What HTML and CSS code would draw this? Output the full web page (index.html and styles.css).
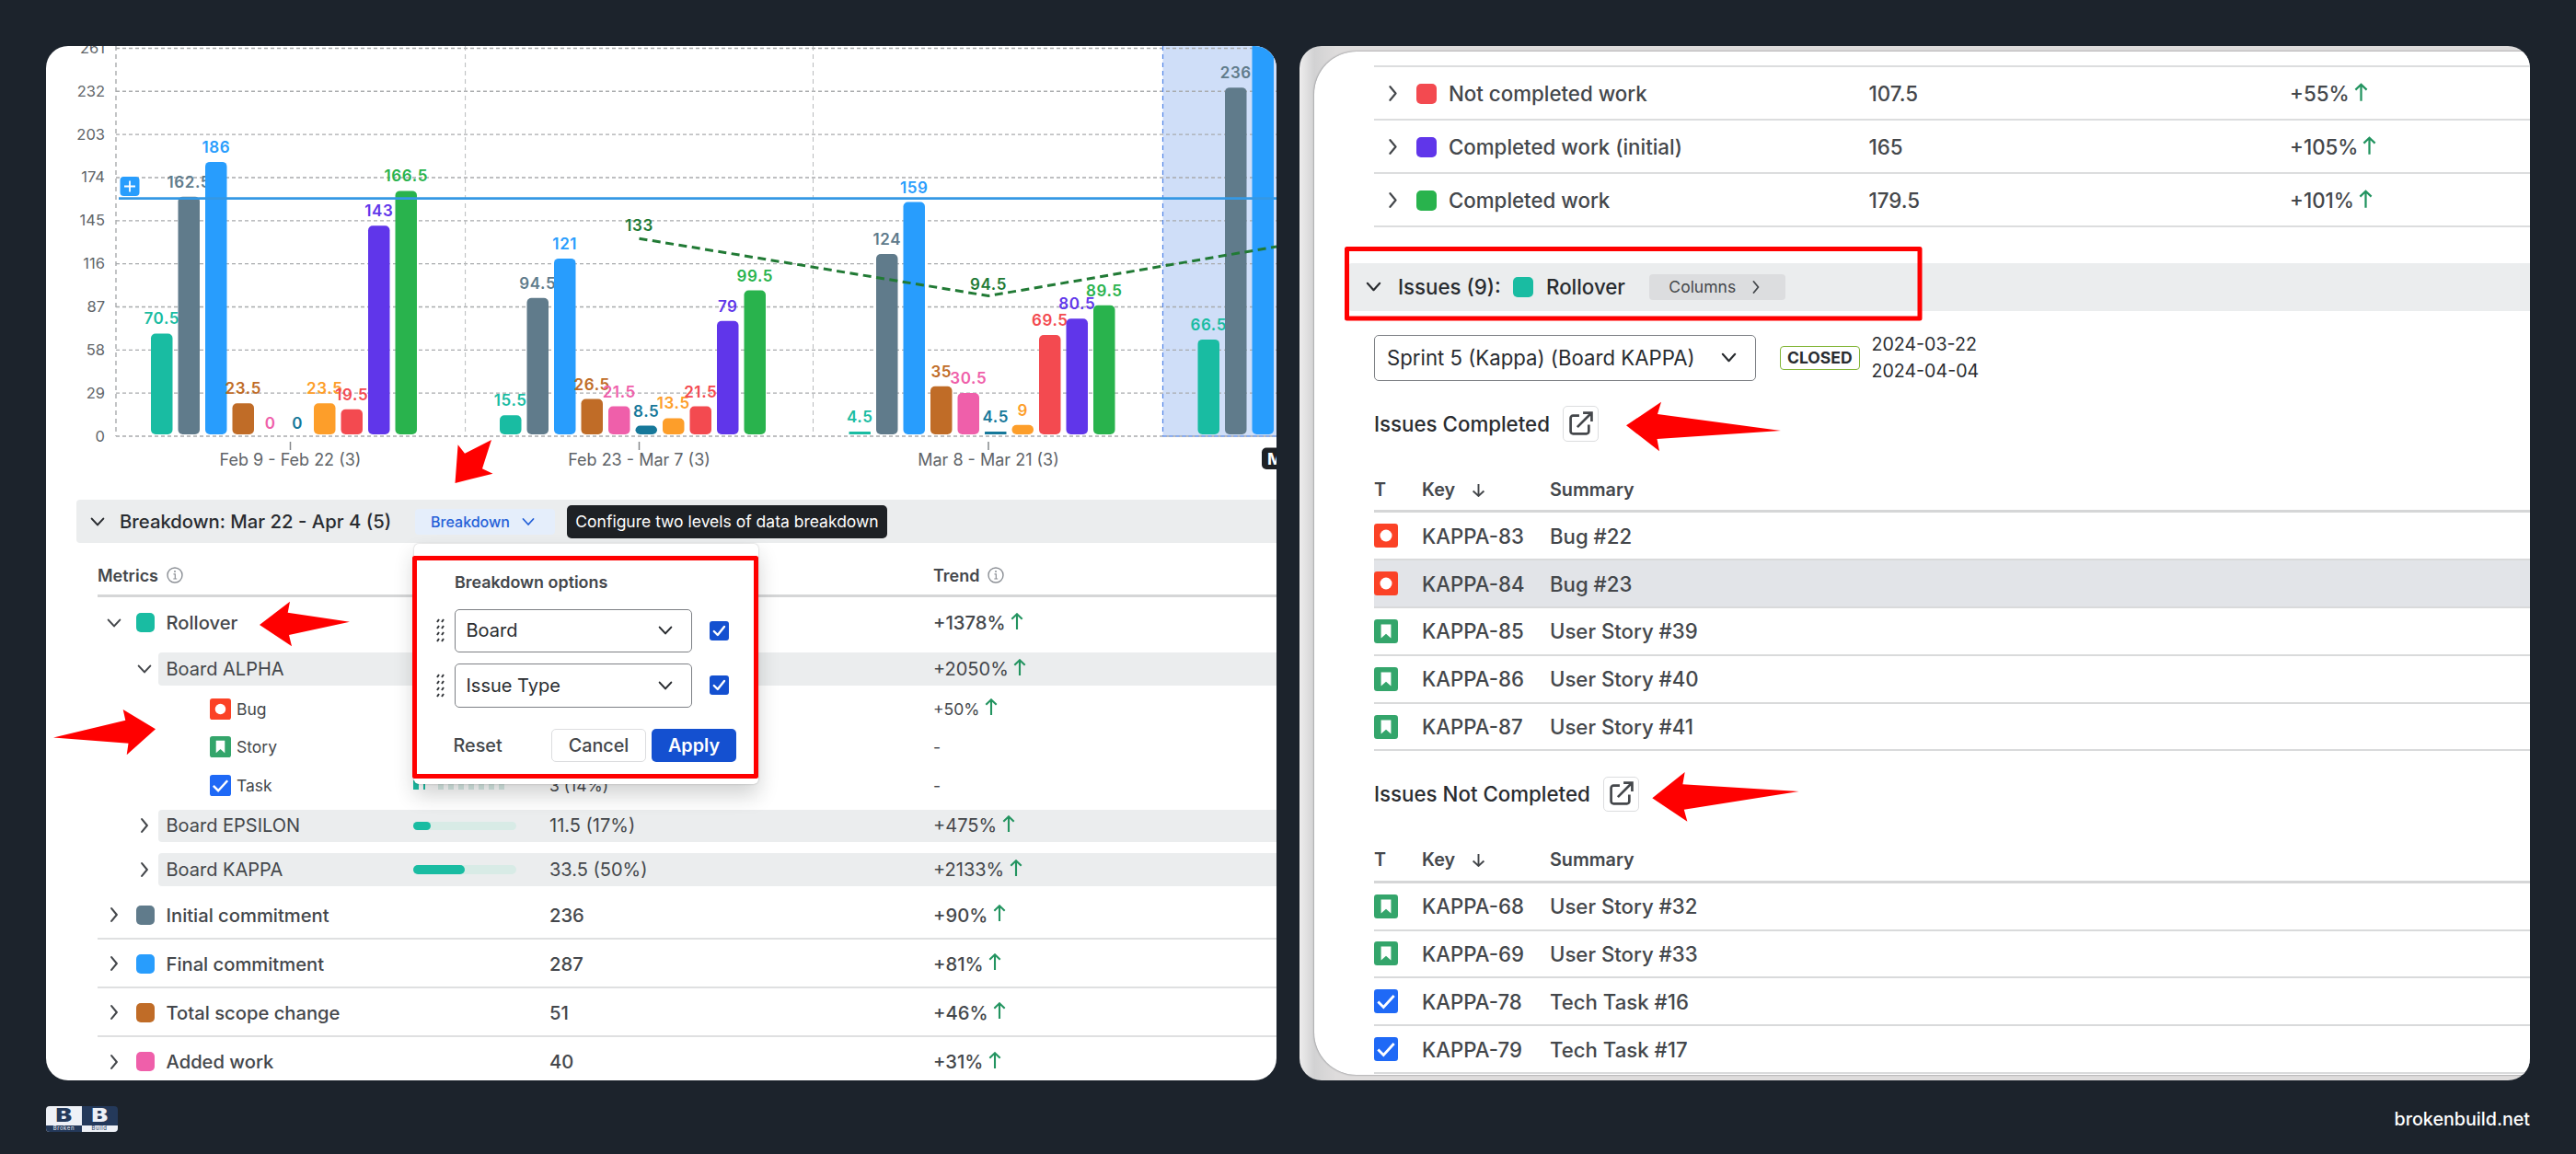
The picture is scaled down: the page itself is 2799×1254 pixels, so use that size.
FILE: index.html
```html
<!DOCTYPE html>
<html lang="en">
<head>
  <meta charset="UTF-8">
  <meta name="viewport" content="width=device-width, initial-scale=1.0">
  <title>Breakdown and issues</title>
  <link rel="stylesheet" href="styles.css">
</head>
<body>
  <!-- shared icons -->
  <svg class="defs" width="0" height="0">
    <symbol id="down" viewBox="0 0 14 14"><path d="M1.5 4 L7 10 L12.500 4" fill="none" stroke="currentColor" stroke-width="1.800" stroke-linecap="round" stroke-linejoin="round"/></symbol>
    <symbol id="right" viewBox="0 0 14 14"><path d="M4.500 1 L9.500 7 L4.500 13" fill="none" stroke="currentColor" stroke-width="1.800" stroke-linecap="round" stroke-linejoin="round"/></symbol>
    <symbol id="up" viewBox="0 0 14 18"><path d="M7 18 V1.500 M1.300 6.800 L7 1.300 L12.700 6.800" fill="none" stroke="currentColor" stroke-width="2.100"/></symbol>
    <symbol id="sort" viewBox="0 0 14 14"><path d="M7 1 V13 M1.500 8 L7 13 L12.500 8" fill="none" stroke="currentColor" stroke-width="1.800"/></symbol>
    <symbol id="info" viewBox="0 0 18 18"><circle cx="9" cy="9" r="8" fill="none" stroke="#8c9096" stroke-width="1.400"/><path d="M7.500 7.800 H9.300 V13 M7.300 13 H11.200" fill="none" stroke="#8c9096" stroke-width="1.200"/><circle cx="9" cy="5" r="1" fill="#8c9096"/></symbol>
    <symbol id="bug" viewBox="0 0 24 24"><rect width="24" height="24" rx="3" fill="#fb4226"/><circle cx="12" cy="12" r="6" fill="#fff"/></symbol>
    <symbol id="story" viewBox="0 0 24 24"><rect width="24" height="24" rx="3" fill="#34a56b"/><path d="M7 5 H17 V19 L12 14.500 L7 19 Z" fill="#fff"/></symbol>
    <symbol id="task" viewBox="0 0 24 24"><rect width="24" height="24" rx="3" fill="#1f69f6"/><path d="M4 12.500 L9.500 18 L20 6.500" fill="none" stroke="#fff" stroke-width="2.600"/></symbol>
    <symbol id="open" viewBox="0 0 26 26"><path d="M11.500 4.500 H5 a2.500 2.500 0 0 0 -2.500 2.500 V21 a2.500 2.500 0 0 0 2.500 2.500 H19 a2.500 2.500 0 0 0 2.500 -2.500 V14 M9.500 16.500 L24 2 M15.500 1.500 H24.500 V10.500" fill="none" stroke="#44474b" stroke-width="2.600"/></symbol>
    <symbol id="grip" viewBox="0 0 10 26"><path d="M1 4 L3 1 M6 4 L8 1 M1 11 L3 8 M6 11 L8 8 M1 18 L3 15 M6 18 L8 15 M1 25 L3 22 M6 25 L8 22" stroke="#33363a" stroke-width="2"/></symbol>
    <symbol id="check" viewBox="0 0 21 21"><rect width="21" height="21" rx="3" fill="#1450d0"/><path d="M4.800 11 L8.800 15 L16 6" fill="none" stroke="#fff" stroke-width="2.400" stroke-linecap="round" stroke-linejoin="round"/></symbol>
  </svg>

  <main class="panels">
    <section class="panel">
      <svg class="chart" id="chart" width="1337" height="493"></svg>

      <div class="section-bar">
        <svg class="chev"><use href="#down"/></svg>
        <span class="section-title">Breakdown: Mar 22 - Apr 4 (5)</span>
        <button class="breakdown-btn">Breakdown <svg class="chev-sm"><use href="#down"/></svg></button>
        <span class="tooltip">Configure two levels of data breakdown</span>
      </div>

      <div class="table">
        <div class="head">
          <span class="head-name">Metrics <svg class="info"><use href="#info"/></svg></span>
          <span>Trend <svg class="info"><use href="#info"/></svg></span>
        </div>
        <div class="row main first">
          <div class="lead"><svg class="chev"><use href="#down"/></svg><i class="swatch teal"></i></div>
          <div class="cells"><span>Rollover</span><span></span><span></span><span>+1378%<svg class="up"><use href="#up"/></svg></span></div>
        </div>
        <div class="row board alpha">
          <div class="lead"><svg class="chev"><use href="#down"/></svg></div>
          <div class="cells"><span>Board ALPHA</span><span></span><span></span><span>+2050%<svg class="up"><use href="#up"/></svg></span></div>
        </div>
        <div class="leaves">
          <div class="row leaf">
            <div class="lead"></div>
            <div class="cells"><span><svg class="type"><use href="#bug"/></svg>Bug</span><span></span><span></span><span>+50%<svg class="up"><use href="#up"/></svg></span></div>
          </div>
          <div class="row leaf">
            <div class="lead"></div>
            <div class="cells"><span><svg class="type"><use href="#story"/></svg>Story</span><span></span><span></span><span>-</span></div>
          </div>
          <div class="row leaf">
            <div class="lead"></div>
            <div class="cells"><span><svg class="type"><use href="#task"/></svg>Task</span><span class="segments"></span><span>3 (14%)</span><span>-</span></div>
          </div>
        </div>
        <div class="row board epsilon">
          <div class="lead"><svg class="chev"><use href="#right"/></svg></div>
          <div class="cells"><span>Board EPSILON</span><span><i class="track"><i class="fill" style="width: 17%"></i></i></span><span>11.5 (17%)</span><span>+475%<svg class="up"><use href="#up"/></svg></span></div>
        </div>
        <div class="row board kappa">
          <div class="lead"><svg class="chev"><use href="#right"/></svg></div>
          <div class="cells"><span>Board KAPPA</span><span><i class="track"><i class="fill" style="width: 50%"></i></i></span><span>33.5 (50%)</span><span>+2133%<svg class="up"><use href="#up"/></svg></span></div>
        </div>
        <div class="rest">
          <div class="row main">
            <div class="lead"><svg class="chev"><use href="#right"/></svg><i class="swatch slate"></i></div>
            <div class="cells"><span>Initial commitment</span><span></span><span>236</span><span>+90%<svg class="up"><use href="#up"/></svg></span></div>
          </div>
          <div class="row main">
            <div class="lead"><svg class="chev"><use href="#right"/></svg><i class="swatch blue"></i></div>
            <div class="cells"><span>Final commitment</span><span></span><span>287</span><span>+81%<svg class="up"><use href="#up"/></svg></span></div>
          </div>
          <div class="row main">
            <div class="lead"><svg class="chev"><use href="#right"/></svg><i class="swatch brown"></i></div>
            <div class="cells"><span>Total scope change</span><span></span><span>51</span><span>+46%<svg class="up"><use href="#up"/></svg></span></div>
          </div>
          <div class="row main">
            <div class="lead"><svg class="chev"><use href="#right"/></svg><i class="swatch pink"></i></div>
            <div class="cells"><span>Added work</span><span></span><span>40</span><span>+31%<svg class="up"><use href="#up"/></svg></span></div>
          </div>
        </div>
      </div>

      <!-- breakdown menu -->
      <div class="popup">
        <div class="popup-inner">
          <div class="popup-title">Breakdown options</div>
          <div class="option"><svg class="grip"><use href="#grip"/></svg><div class="select">Board <svg class="chev"><use href="#down"/></svg></div><svg class="check"><use href="#check"/></svg></div>
          <div class="option"><svg class="grip"><use href="#grip"/></svg><div class="select">Issue Type <svg class="chev"><use href="#down"/></svg></div><svg class="check"><use href="#check"/></svg></div>
          <div class="actions"><span class="reset">Reset</span><button class="cancel">Cancel</button><button class="apply">Apply</button></div>
        </div>
      </div>
    </section>

    <section class="panel panel-issues">
      <div class="sheet">
        <div class="metrics">
          <div class="metric cut"></div>
          <div class="metric"><svg class="chev"><use href="#right"/></svg><i class="swatch red"></i><span class="m-name">Not completed work</span><span class="m-value">107.5</span><span>+55%</span><svg class="up"><use href="#up"/></svg></div>
          <div class="metric"><svg class="chev"><use href="#right"/></svg><i class="swatch violet"></i><span class="m-name">Completed work (initial)</span><span class="m-value">165</span><span>+105%</span><svg class="up"><use href="#up"/></svg></div>
          <div class="metric"><svg class="chev"><use href="#right"/></svg><i class="swatch green"></i><span class="m-name">Completed work</span><span class="m-value">179.5</span><span>+101%</span><svg class="up"><use href="#up"/></svg></div>
        </div>
        <div class="issues-bar">
          <svg class="chev"><use href="#down"/></svg>
          <span class="issues-count">Issues (9):</span>
          <i class="swatch teal"></i>
          <span class="issues-metric">Rollover</span>
          <button class="columns-btn">Columns <svg class="chev-sm"><use href="#right"/></svg></button>
        </div>
        <div class="sprint">
          <div class="select sprint-select">Sprint 5 (Kappa) (Board KAPPA) <svg class="chev"><use href="#down"/></svg></div>
          <span class="closed">CLOSED</span>
          <div class="dates">2024-03-22<br>2024-04-04</div>
        </div>

        <div class="list-title"><span>Issues Completed</span><button class="open-btn"><svg><use href="#open"/></svg></button></div>
        <div class="issues">
          <div class="issues-head"><span>T</span><span>Key <svg class="sort"><use href="#sort"/></svg></span><span>Summary</span></div>
          <div class="issue"><svg class="type"><use href="#bug"/></svg><span>KAPPA-83</span><span>Bug #22</span></div>
          <div class="issue active"><svg class="type"><use href="#bug"/></svg><span>KAPPA-84</span><span>Bug #23</span></div>
          <div class="issue"><svg class="type"><use href="#story"/></svg><span>KAPPA-85</span><span>User Story #39</span></div>
          <div class="issue"><svg class="type"><use href="#story"/></svg><span>KAPPA-86</span><span>User Story #40</span></div>
          <div class="issue"><svg class="type"><use href="#story"/></svg><span>KAPPA-87</span><span>User Story #41</span></div>
        </div>

        <div class="list-title"><span>Issues Not Completed</span><button class="open-btn"><svg><use href="#open"/></svg></button></div>
        <div class="issues">
          <div class="issues-head"><span>T</span><span>Key <svg class="sort"><use href="#sort"/></svg></span><span>Summary</span></div>
          <div class="issue"><svg class="type"><use href="#story"/></svg><span>KAPPA-68</span><span>User Story #32</span></div>
          <div class="issue"><svg class="type"><use href="#story"/></svg><span>KAPPA-69</span><span>User Story #33</span></div>
          <div class="issue"><svg class="type"><use href="#task"/></svg><span>KAPPA-78</span><span>Tech Task #16</span></div>
          <div class="issue"><svg class="type"><use href="#task"/></svg><span>KAPPA-79</span><span>Tech Task #17</span></div>
        </div>
      </div>
    </section>
  </main>

  <footer class="footer">
    <div class="logo">
      <div class="logo-half"><b>B</b><small>Broken</small></div>
      <div class="logo-half dark"><b>B</b><small>Build</small></div>
    </div>
    <span class="site">brokenbuild.net</span>
  </footer>

  <!-- red callouts -->
  <svg class="callouts" width="2799" height="1254">
    <g fill="none" stroke="#ff0000" stroke-width="5" stroke-linejoin="round">
      <rect x="450.500" y="606.500" width="371" height="237"/>
      <rect x="1463.500" y="270.500" width="622.500" height="75.500"/>
    </g>
    <g fill="#ff0000">
      <path d="M534 478 L505 492.700 L497.600 483.300 L494.500 525 L535.500 514.700 L524 509.300 Z"/>
      <path d="M282 679 L315 653.700 L312.700 665.700 L380 675.700 L314 690 L317 702.300 Z"/>
      <path d="M169 792.300 L133.700 771 L136.300 782.700 L58 801.500 L139.500 807.700 L137.700 820.300 Z"/>
      <path d="M1767 462.300 L1805 436.700 L1801 450 L1935 468 L1800.500 477 L1803 490.300 Z"/>
      <path d="M1795.300 867.300 L1830.700 839 L1828.400 852.300 L1954.600 860 L1829.800 879.700 L1833.400 892.700 Z"/>
    </g>
  </svg>

  <script src="chart.js"></script>
</body>
</html>
```
FILE: styles.css
```css
* {
  box-sizing: border-box;
}
body {
  margin: 0;
  width: 2799px;
  height: 1254px;
  padding: 50px 50px 0;
  overflow: hidden;
  position: relative;
  background-color: #1c232c;
  font-family: Inter, 'Liberation Sans', sans-serif;
  font-size: 20px;
  color: #44474b;
}
button {
  font-family: inherit;
  border: none;
  padding: 0;
  display: flex;
  align-items: center;
  justify-content: center;
}
.defs {
  position: absolute;
}
.panels {
  display: flex;
  justify-content: space-between;
}
.panel {
  position: relative;
  width: 1337px;
  height: 1123.5px;
  border-radius: 24px;
  background-color: #fff;
  overflow: hidden;
}
.chev {
  width: 16px;
  height: 16px;
  flex: none;
}
.chev-sm {
  width: 14px;
  height: 14px;
  flex: none;
}
.swatch {
  display: block;
  width: 20px;
  height: 21px;
  border-radius: 5px;
  flex: none;
}
.teal { background-color: #19bca2; }
.slate { background-color: #607b8b; }
.blue { background-color: #289dfd; }
.brown { background-color: #c06c27; }
.pink { background-color: #ef5faa; }
.red { background-color: #f34a50; }
.violet { background-color: #6036ea; }
.green { background-color: #29b34d; }

/* chart */
.chart {
  display: block;
}
.chart .tick {
  font-size: 16.500px;
  fill: #606468;
  text-anchor: end;
}
.chart .period {
  font-size: 18px;
  fill: #606468;
  text-anchor: middle;
}
.chart .value {
  font-size: 17px;
  font-weight: 600;
  text-anchor: middle;
  letter-spacing: 0.6px;
}

/* breakdown header */
.section-bar {
  display: flex;
  align-items: center;
  height: 47px;
  margin-left: 33px;
  padding-left: 15px;
  border-radius: 4px 0 0 4px;
  background-color: #ebedee;
  color: #292c30;
}
.section-title {
  width: 321px;
  margin-left: 16px;
  font-size: 20.300px;
  font-weight: 500;
  white-space: nowrap;
}
.breakdown-btn {
  width: 152px;
  height: 28px;
  padding-right: 5px;
  gap: 13px;
  border-radius: 4px;
  background-color: #e5eefb;
  color: #2460d8;
  font-size: 16px;
  font-weight: 500;
}
.tooltip {
  width: 348px;
  height: 36px;
  margin-left: 13px;
  border-radius: 5px;
  background-color: #1e2125;
  color: #fff;
  font-size: 17.500px;
  line-height: 36px;
  text-align: center;
  white-space: nowrap;
}

/* metrics table */
.table {
  margin-left: 56px;
}
.head {
  display: flex;
  height: 59px;
  padding-top: 14px;
  border-bottom: 3px solid #d5d6d7;
  font-size: 18px;
  font-weight: 600;
  align-items: center;
}
.head span {
  display: flex;
  align-items: center;
  gap: 8.5px;
}
.head .head-name {
  width: 908px;
}
.info {
  width: 18px;
  height: 18px;
}
.row {
  display: flex;
}
.lead {
  width: 66px;
  flex: none;
  display: flex;
  align-items: center;
}
.cells {
  flex: 1;
  display: grid;
  grid-template-columns: 268.5px 148px 417px 1fr;
  align-items: center;
  padding-left: 8.5px;
  white-space: nowrap;
}
.cells span {
  display: flex;
  align-items: center;
}
.up {
  width: 14px;
  height: 18px;
  margin: -4px 0 0 5.5px;
  color: #239460;
}
.main {
  height: 53.2px;
  padding-top: 2px;
  border-bottom: 2px solid #dfe0e1;
  font-size: 20.200px;
  font-weight: 500;
}
.main .lead {
  padding-left: 9.5px;
}
.main .swatch {
  margin-left: 16.5px;
}
.first {
  height: 55px;
  padding-top: 0;
  border-bottom: none;
}
.board .lead {
  padding-left: 42.5px;
}
.board .cells {
  border-radius: 4px 0 0 4px;
  background-color: #ebedee;
}
.alpha {
  height: 35.5px;
  margin-top: 5px;
}
.epsilon {
  height: 34.5px;
  margin-top: 6px;
}
.kappa {
  height: 35.5px;
  margin-top: 12.5px;
}
.leaves {
  margin-top: 5px;
}
.leaf {
  height: 41.5px;
  font-size: 17.500px;
}
.leaf .cells span:first-child {
  padding-left: 47.5px;
}
.leaf .type {
  width: 23px;
  height: 23px;
  margin-right: 6px;
}
.segments {
  width: 102px;
  height: 10px;
  background: linear-gradient(90deg, #19bca2 6px, #fff 6px 11px, #19bca2 11px 13px, #fff 13px 22px, transparent 22px), repeating-linear-gradient(90deg, transparent 0 5px, #d8ebe6 5px 11px);
}
.track {
  display: block;
  width: 112px;
  height: 9.5px;
  border-radius: 5px;
  background-color: #d8ebe6;
}
.fill {
  display: block;
  height: 100%;
  border-radius: 5px;
  background-color: #19bca2;
}
.rest {
  margin-top: 5px;
}

/* popup */
.popup {
  position: absolute;
  left: 400px;
  top: 541px;
  width: 374px;
  height: 261px;
  border-radius: 5px;
  background-color: #fff;
  box-shadow: 0 12px 22px rgba(30, 33, 37, 0.2), 0 0 2px rgba(30, 33, 37, 0.3);
}
.popup-inner {
  padding: 29.5px 0 0 24px;
}
.popup-title {
  margin-left: 20px;
  height: 24px;
  line-height: 24px;
  font-size: 17.900px;
  font-weight: 600;
}
.option {
  display: flex;
  align-items: center;
  margin-top: 17px;
}
.option + .option {
  margin-top: 12px;
}
.grip {
  width: 10px;
  height: 26px;
}
.select {
  display: flex;
  align-items: center;
  justify-content: space-between;
  width: 258px;
  height: 47.5px;
  margin-left: 10px;
  padding: 0 20px 0 11.5px;
  border: 1.5px solid #7d8085;
  border-radius: 5px;
  color: #292c30;
}
.check {
  width: 21px;
  height: 21px;
  margin-left: 19px;
}
.actions {
  display: flex;
  align-items: center;
  margin: 23px 0 0 18.5px;
  font-size: 19.800px;
  font-weight: 500;
}
.reset {
  width: 106.5px;
}
.cancel,
.apply {
  height: 36px;
  border-radius: 5px;
  font-size: 19.800px;
  font-weight: 500;
}
.cancel {
  width: 103px;
  border: 1.5px solid #dcdddf;
  background-color: #fff;
  color: #44474b;
}
.apply {
  width: 92px;
  margin-left: 6px;
  background-color: #1450d0;
  color: #fff;
  font-weight: 600;
}

/* issues panel */
.panel-issues {
  padding: 5.5px 0 0 16px;
  background: linear-gradient(90deg, #eeeded, #d2d2d3 16px, #dedcdc 40px);
  font-size: 22px;
}
.sheet {
  height: 1112.5px;
  padding-left: 37px;
  border-radius: 46px 0 0 46px;
  background-color: #fff;
  box-shadow: 0 0 2px rgba(40, 44, 50, 0.7);
  overflow: hidden;
}
.metrics,
.sprint,
.list-title,
.issues {
  margin-left: 28px;
}
.panel-issues .chev {
  width: 17px;
  height: 17px;
}
.panel-issues .swatch {
  width: 22px;
  height: 22px;
}
.metric {
  display: flex;
  align-items: center;
  height: 58.2px;
  padding: 2px 0 0 11.5px;
  border-bottom: 2px solid #dcddde;
  font-size: 22.300px;
  font-weight: 500;
}
.metric.cut {
  height: 17px;
}
.metric .swatch {
  margin: 0 13.5px 0 17px;
}
.m-name {
  width: 456.5px;
}
.m-value {
  width: 457.5px;
}
.metric .up {
  width: 15px;
  height: 20px;
  margin-left: 5px;
}
.issues-bar {
  display: flex;
  align-items: center;
  height: 51.6px;
  margin-top: 39px;
  padding-left: 19px;
  border-radius: 4px 0 0 4px;
  background-color: #ebedee;
  color: #292c30;
  font-size: 22.300px;
  font-weight: 500;
}
.issues-count {
  width: 125px;
  margin-left: 18px;
}
.issues-metric {
  width: 112px;
  margin-left: 14px;
}
.columns-btn {
  width: 147.5px;
  height: 28.5px;
  padding-right: 3px;
  gap: 15px;
  border-radius: 4px;
  background-color: #dcdddf;
  color: #44474b;
  font-size: 17.500px;
}
.sprint {
  display: flex;
  align-items: center;
  margin-top: 26px;
  color: #292c30;
}
.sprint-select {
  width: 414.5px;
  height: 50.4px;
  margin: 0;
  padding-left: 13px;
  font-size: 22.200px;
}
.closed {
  width: 86.5px;
  height: 25.5px;
  margin-left: 26.5px;
  border: 1.5px solid #82b536;
  border-radius: 4px;
  font-size: 17.500px;
  font-weight: 700;
  line-height: 23px;
  text-align: center;
}
.dates {
  height: 58px;
  margin: -4px 0 -4px 13px;
  font-size: 19.600px;
  line-height: 29px;
}
.list-title {
  display: flex;
  align-items: center;
  gap: 14px;
  height: 38.4px;
  margin-top: 27.2px;
  color: #292c30;
  font-size: 22.300px;
  font-weight: 500;
}
.open-btn {
  width: 39px;
  height: 38.4px;
  border: 1.5px solid #dcdddf;
  border-radius: 5px;
  background-color: #fff;
}
.open-btn svg {
  width: 27px;
  height: 27px;
}
.issues-head,
.issue {
  display: grid;
  grid-template-columns: 52px 139px 1fr;
  align-items: center;
}
.issues-head {
  height: 77.8px;
  padding-top: 29px;
  border-bottom: 3px solid #d5d6d7;
  font-size: 19.800px;
  font-weight: 600;
}
.sort {
  width: 15px;
  height: 15px;
  margin: 0 0 -1px 13px;
}
.issue {
  height: 51.8px;
  border-bottom: 2px solid #d9dadb;
  font-size: 22.200px;
  font-weight: 500;
}
.issue .type {
  width: 26px;
  height: 26px;
}
.issue.active {
  background-color: #e2e4e8;
}

/* footer */
.footer {
  display: flex;
  justify-content: space-between;
  margin-top: 28px;
  color: #fff;
}
.logo {
  display: flex;
  width: 77.5px;
  height: 28px;
  border-radius: 4px;
  overflow: hidden;
}
.logo-half {
  flex: 1;
  background-color: #eef1f7;
  color: #24395a;
  text-align: center;
}
.logo-half b {
  display: block;
  height: 21px;
  font-size: 19.500px;
  font-weight: 900;
  line-height: 21px;
  transform: scaleX(1.35);
}
.logo-half small {
  display: block;
  height: 7px;
  background-color: #24395a;
  color: #eef1f7;
  font-size: 6px;
  line-height: 6.500px;
  letter-spacing: 0.6px;
}
.logo-half.dark {
  background-color: #24395a;
  color: #eef1f7;
}
.logo-half.dark small {
  background-color: #eef1f7;
  color: #24395a;
}
.site {
  font-size: 19.700px;
  font-weight: 500;
  line-height: 28px;
}
.callouts {
  position: absolute;
  left: 0;
  top: 0;
}
```
FILE: chart.js
```js
const chart = document.getElementById('chart');
const NS = 'http://www.w3.org/2000/svg';
const base = 424;
const unit = 1.615;
const colors = ['#19bca2', '#607b8b', '#289dfd', '#c06c27', '#ef5faa', '#16789a', '#fd9e2a', '#f34a50', '#6036ea', '#29b34d'];
const groups = [
  { x: 114, mid: 265.5, name: 'Feb 9 - Feb 22 (3)', values: [70.5, 162.5, 186, 23.5, 0, 0, 23.5, 19.5, 143, 166.5] },
  { x: 493, mid: 644.5, name: 'Feb 23 - Mar 7 (3)', values: [15.5, 94.5, 121, 26.5, 21.5, 8.5, 13.5, 21.5, 79, 99.5] },
  { x: 872.5, mid: 1024, name: 'Mar 8 - Mar 21 (3)', values: [4.5, 124, 159, 35, 30.5, 4.5, 9, 69.5, 80.5, 89.5] },
  { x: 1251.5, values: [66.5, 236, 287] }
];

function add(tag, attrs, text) {
  const el = document.createElementNS(NS, tag);
  for (const key in attrs) {
    el.setAttribute(key, attrs[key]);
  }
  if (text !== undefined) {
    el.textContent = text;
  }
  chart.appendChild(el);
}

function line(x1, y1, x2, y2, stroke, width, dash) {
  add('line', { x1, y1, x2, y2, stroke, 'stroke-width': width, 'stroke-dasharray': dash });
}

// selected period
add('rect', { x: 1213.5, y: 0, width: 130, height: base, fill: '#cfdef8' });

// grid
for (let v = 0; v <= 261; v += 29) {
  const y = base - v * unit;
  line(76, y, 1337, y, '#a9abad', 1.4, '4 3');
  add('text', { x: 64, y: y + 5.5, class: 'tick' }, v);
}
line(76, 0, 76, base, '#a9abad', 1.4, '5 4');
[455.6, 833.5].forEach(x => line(x, 0, x, base, '#b9bbbd', 1, '5 4'));
line(1213.5, 0, 1213.5, base, '#4f83e6', 1.2, '5 4');
line(1213.5, base, 1337, base, '#6b96ea', 1.4, '4 3');

// bars
groups.forEach(group => {
  group.values.forEach((v, i) => {
    const x = group.x + i * 29.5;
    const top = base - v * unit + 2.3;
    const height = base - 2 - top;
    if (height > 0) {
      add('rect', { x, y: top, width: 23.5, height, rx: Math.min(5, height / 2 > 2 ? 5 : 0.5), fill: colors[i] });
    }
    add('text', { x: x + 11.75, y: top - 10, class: 'value', fill: colors[i] }, v);
  });
  if (group.name) {
    line(group.mid, base + 6, group.mid, base + 15, '#85888b', 1.5, 'none');
    add('text', { x: group.mid, y: 455.5, class: 'period' }, group.name);
  }
});

// average line
line(79, 165.7, 1337, 165.7, '#3598e4', 2.8, 'none');
add('rect', { x: 80.5, y: 142, width: 21, height: 21, rx: 4, fill: '#289dfd' });
add('path', { d: 'M85 152.500 H97 M91 146.500 V158.500', stroke: '#fff', 'stroke-width': 1.8 });

// trend line
add('path', { d: 'M644.500 209.200 L1024 271.500 L1337 218', fill: 'none', stroke: '#217a35', 'stroke-width': 3, 'stroke-dasharray': '9 5.500' });
add('text', { x: 644.5, y: 201, class: 'value', fill: '#217a35' }, 133);
add('text', { x: 1024, y: 264.7, class: 'value', fill: '#217a35' }, 94.5);

// current period label
add('rect', { x: 1321, y: 436.5, width: 60, height: 23.5, rx: 5, fill: '#1e2125' });
add('text', { x: 1327, y: 455, fill: '#fff', 'font-size': 18, 'font-weight': 700 }, 'Mar 22');
```
